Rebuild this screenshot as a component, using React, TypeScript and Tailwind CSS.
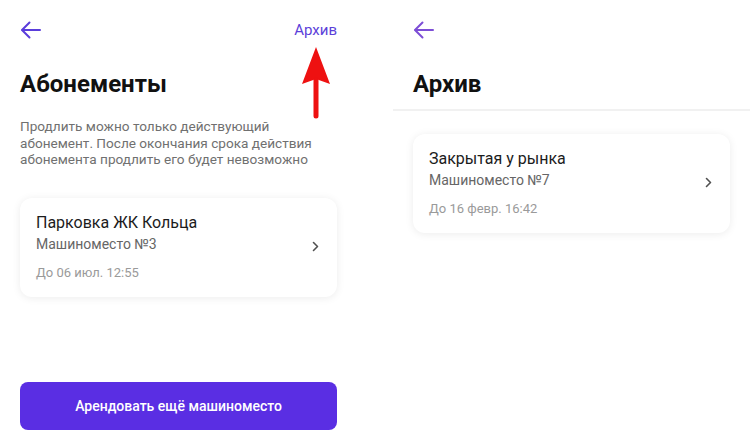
const BackArrow = ({ color }: { color: string }) => (
  <svg width="22" height="22" viewBox="0 0 22 22" fill="none" stroke={color} strokeWidth="2" strokeLinecap="round" strokeLinejoin="round">
    <path d="M20 11H2.5" />
    <path d="M9.5 3.5 2 11l7.5 7.5" />
  </svg>
);

const Chevron = () => (
  <svg width="7" height="11" viewBox="0 0 7 11" fill="none" stroke="#505050" strokeWidth="1.6" strokeLinecap="round" strokeLinejoin="round">
    <path d="M1.5 1.5 5.5 5.5 1.5 9.5" />
  </svg>
);

type Pass = { name: string; spot: string; until: string };

const PassCard = ({ pass }: { pass: Pass }) => (
  <div className="flex items-center rounded-xl bg-white pl-4 pr-[18px] pt-[14px] pb-[16px] shadow-[0_1px_8px_rgba(0,0,0,0.08)]">
    <div className="flex-1">
      <div className="text-[16px] leading-[22px] text-[#1c1c1c]">{pass.name}</div>
      <div className="text-[14px] leading-5 text-[#666]">{pass.spot}</div>
      <div className="mt-[11px] text-[13px] leading-4 text-[#9a9a9a]">{pass.until}</div>
    </div>
    <Chevron />
  </div>
);

const App = () => {
  return (
    <div className="flex h-[447px] w-[750px] gap-[36px] overflow-hidden bg-white font-['Roboto',sans-serif]">
      {/* left screen */}
      <div className="relative flex w-[357px] flex-col px-5 pb-[17px]">
        <div className="flex h-[60px] items-center justify-between">
          <BackArrow color="#5a3ddb" />
          <span className="text-[15px] text-[#5b3fd9]">Архив</span>
        </div>
        <h1 className="mt-2 text-[24px] font-bold leading-8 text-[#111]">Абонементы</h1>
        <p className="mt-[18px] text-[13.6px] leading-[16.5px] text-[#707070]">
          Продлить можно только действующий абонемент. После окончания срока действия абонемента продлить его будет невозможно
        </p>
        <div className="mt-[30px]">
          <PassCard pass={{ name: "Парковка ЖК Кольца", spot: "Машиноместо №3", until: "До 06 июл. 12:55" }} />
        </div>
        <button className="mt-auto h-12 w-full rounded-lg bg-[#5a2ee3] text-[14px] font-medium text-white">
          Арендовать ещё машиноместо
        </button>

        {/* red annotation arrow */}
        <svg className="absolute left-[300px] top-[46px]" width="32" height="74" viewBox="0 0 32 74">
          <path d="M16 1 L30 38 L16 33 L2 38 Z" fill="#ee1111" />
          <path d="M16 34 V70" stroke="#ee1111" strokeWidth="5" strokeLinecap="round" />
        </svg>
      </div>

      {/* right screen */}
      <div className="flex flex-1 flex-col">
        <div className="h-[111px] border-b-2 border-[#f1f1f1] px-5">
          <div className="flex h-[60px] items-center">
            <BackArrow color="#7d4ed6" />
          </div>
          <h1 className="mt-2 text-[24px] font-bold leading-8 text-[#111]">Архив</h1>
        </div>
        <div className="mt-[23px] px-5">
          <PassCard pass={{ name: "Закрытая у рынка", spot: "Машиноместо №7", until: "До 16 февр. 16:42" }} />
        </div>
      </div>
    </div>
  );
};

export default App;
